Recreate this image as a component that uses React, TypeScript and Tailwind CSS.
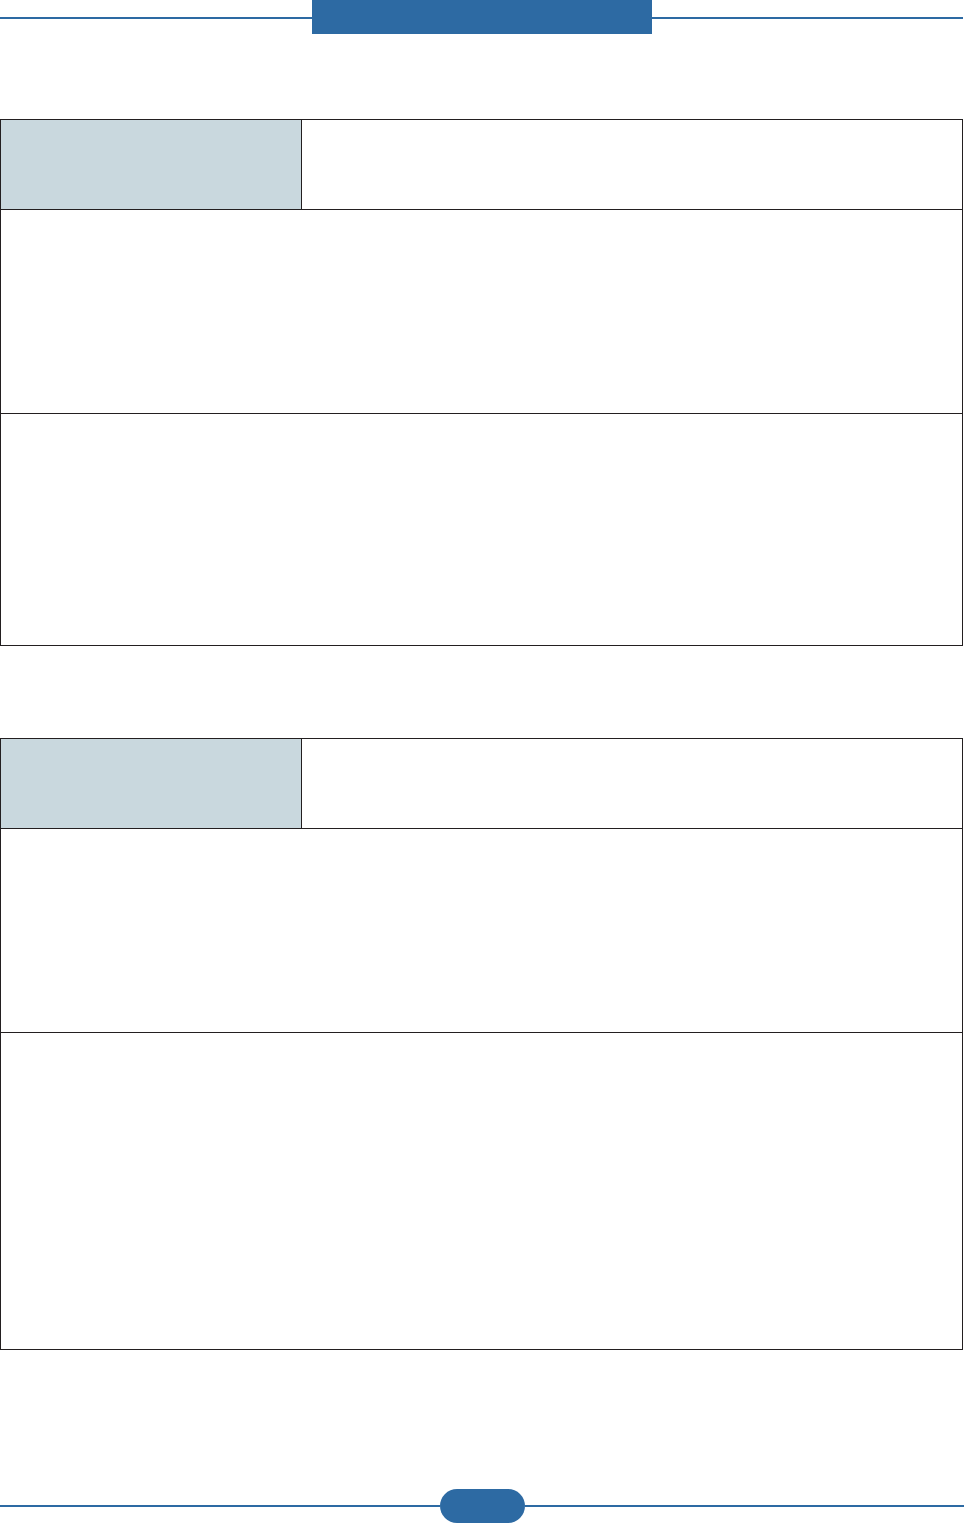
const Line = ({ className = "" }: { className?: string }) => (
  <div className={`h-[2px] bg-[#2d6aa3] ${className}`} />
)

type Props = { rows: number[] }

const SpecTable = ({ rows }: Props): JSX.Element => {
  return (
    <div className="w-[963px] border border-[#231f20] bg-white">
      <div className="flex h-[90px] border-b border-[#231f20]">
        <div className="w-[301px] border-r border-[#231f20] bg-[#c9d8de]" />
        <div className="flex-1" />
      </div>
      {rows.map((h, i) => (
        <div
          key={i}
          className={i < rows.length - 1 ? "border-b border-[#231f20]" : ""}
          style={{ height: h }}
        />
      ))}
    </div>
  )
}

const App = (): JSX.Element => {
  return (
    <div className="w-[964px] h-[1525px] bg-white font-['Liberation_Sans',sans-serif] overflow-hidden">
      <div className="flex h-[34px]">
        <div className="flex-1 pt-[17px]">
          <Line />
        </div>
        <div className="w-[340px] h-[34px] bg-[#2d6aa3]" />
        <div className="w-[311px] mr-px pt-[17px]">
          <Line />
        </div>
      </div>

      <div className="mt-[85px]">
        <SpecTable rows={[204, 231]} />
      </div>

      <div className="mt-[92px]">
        <SpecTable rows={[204, 316]} />
      </div>

      <div className="mt-[139px] flex h-[34px] items-center">
        <Line className="flex-1" />
        <div className="w-[85px] h-[34px] rounded-full bg-[#2d6aa3]" />
        <Line className="flex-1" />
      </div>
    </div>
  )
}

export default App
